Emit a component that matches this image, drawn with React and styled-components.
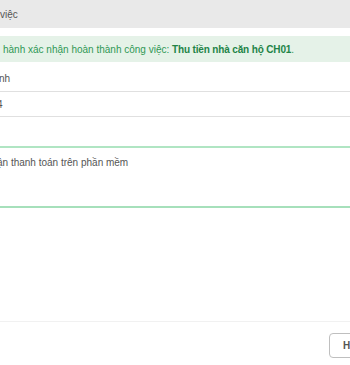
import styled, { createGlobalStyle } from "styled-components";

const GlobalStyle = createGlobalStyle`
  *, *::before, *::after {
    box-sizing: border-box;
  }
  html, body {
    margin: 0;
    padding: 0;
    background: #fff;
    overflow: hidden;
  }
  body {
    font-family: "Liberation Sans", Arial, sans-serif;
    font-size: 10px;
    color: #555;
  }
`;

const Modal = styled.div`
  width: 350px;
  height: 365px;
  display: flex;
  flex-direction: column;
  overflow: hidden;
`;

const Header = styled.div`
  height: 28px;
  background: #e9e9e9;
  display: flex;
  align-items: center;
  color: #555;
  font-size: 10px;
  white-space: nowrap;
`;

const Body = styled.div`
  padding-top: 8px;
  display: flex;
  flex-direction: column;
`;

const Alert = styled.div`
  height: 26px;
  background: #e5f2e8;
  color: #2f9855;
  display: flex;
  align-items: center;
  padding-left: 3px;
  white-space: nowrap;
  font-size: 10px;

  b {
    font-weight: 700;
    color: #228447;
    letter-spacing: -0.15px;
  }
`;

const Row = styled.div`
  height: ${(p) => p.$h || 25}px;
  display: flex;
  align-items: center;
  padding-top: ${(p) => p.$pt || 0}px;
  border-bottom: ${(p) => (p.$noLine ? "none" : "1px solid #e0e0e0")};
  white-space: nowrap;
  color: #555;
  font-size: 10px;
`;

const Clip = styled.span`
  margin-left: ${(p) => p.$shift || 0}px;
`;

const TextArea = styled.div`
  height: 62px;
  border-top: 2px solid #b0e5c3;
  border-bottom: 2px solid #a6e0bb;
  padding-top: 9px;
  white-space: nowrap;
  color: #555;
  font-size: 10px;
`;

const Spacer = styled.div`
  flex: 1;
`;

const Footer = styled.div`
  height: 44px;
  border-top: 1px solid #f1f1f1;
  display: flex;
  justify-content: flex-end;
  padding-top: 11px;
`;

const Button = styled.button`
  height: 25px;
  margin-right: -40px;
  width: 61px;
  padding: 0 13px;
  text-align: left;
  border: 1px solid #bfbfbf;
  border-radius: 4px;
  background: #fff;
  color: #555;
  font-family: "Liberation Sans", Arial, sans-serif;
  font-size: 10px;
  font-weight: 700;
`;

export default function App() {
  return (
    <>
      <GlobalStyle />
      <Modal>
        <Header>việc</Header>
        <Body>
          <Alert>
            hành xác nhận hoàn thành công việc:&nbsp;<b>Thu tiền nhà căn hộ CH01</b>.
          </Alert>
          <Row $h={30} $pt={4}>
            <Clip $shift={-1}>nh</Clip>
          </Row>
          <Row>
            <Clip $shift={-3}>4</Clip>
          </Row>
          <Row $h={29} $noLine />
          <TextArea>
            <Clip $shift={-3}>ận thanh toán trên phần mềm</Clip>
          </TextArea>
        </Body>
        <Spacer />
        <Footer>
          <Button>Hủy</Button>
        </Footer>
      </Modal>
    </>
  );
}
